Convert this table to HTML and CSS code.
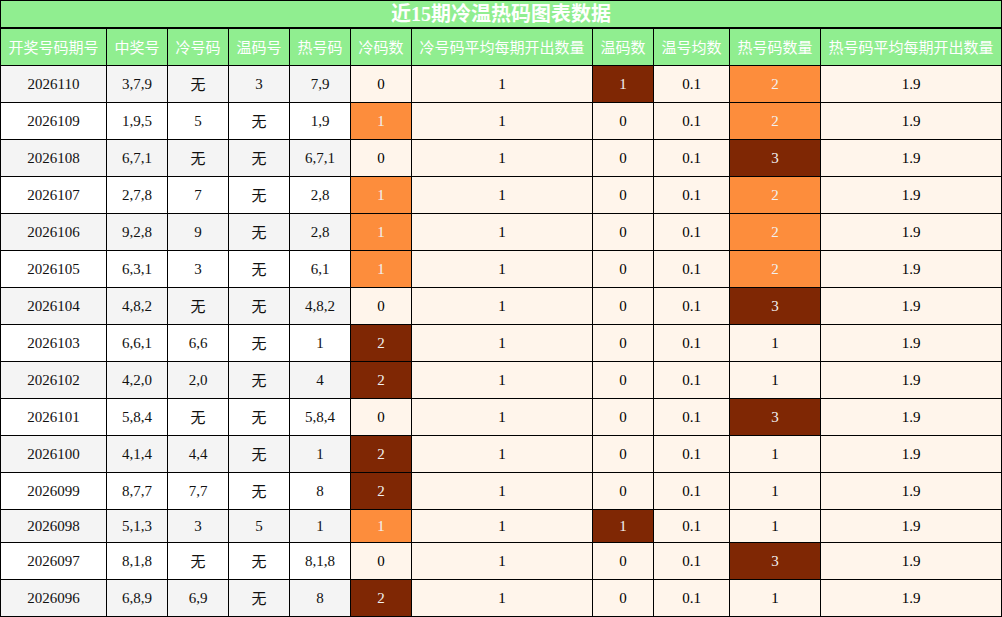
FILE: index.html
```html
<!DOCTYPE html>
<html lang="zh">
<head>
<meta charset="utf-8">
<title>近15期冷温热码图表数据</title>
<link rel="stylesheet" href="styles.css">
</head>
<body>
<div class="title">近15期冷温热码图表数据</div>
<table class="grid">
  <thead>
    <tr>
      <th class="w106">开奖号码期号</th>
      <th class="w61">中奖号</th>
      <th class="w61">冷号码</th>
      <th class="w61">温码号</th>
      <th class="w61">热号码</th>
      <th class="w61">冷码数</th>
      <th class="w181">冷号码平均每期开出数量</th>
      <th class="w61">温码数</th>
      <th class="w76">温号均数</th>
      <th class="w91">热号码数量</th>
      <th class="w181">热号码平均每期开出数量</th>
    </tr>
  </thead>
  <tbody>
    <tr class="odd"><td>2026110</td><td>3,7,9</td><td><span class="none">无</span></td><td>3</td><td>7,9</td><td class="c0">0</td><td class="c0">1</td><td class="c2">1</td><td class="c0">0.1</td><td class="c1">2</td><td class="c0">1.9</td></tr>
    <tr><td>2026109</td><td>1,9,5</td><td>5</td><td><span class="none">无</span></td><td>1,9</td><td class="c1">1</td><td class="c0">1</td><td class="c0">0</td><td class="c0">0.1</td><td class="c1">2</td><td class="c0">1.9</td></tr>
    <tr class="odd"><td>2026108</td><td>6,7,1</td><td><span class="none">无</span></td><td><span class="none">无</span></td><td>6,7,1</td><td class="c0">0</td><td class="c0">1</td><td class="c0">0</td><td class="c0">0.1</td><td class="c2">3</td><td class="c0">1.9</td></tr>
    <tr><td>2026107</td><td>2,7,8</td><td>7</td><td><span class="none">无</span></td><td>2,8</td><td class="c1">1</td><td class="c0">1</td><td class="c0">0</td><td class="c0">0.1</td><td class="c1">2</td><td class="c0">1.9</td></tr>
    <tr class="odd"><td>2026106</td><td>9,2,8</td><td>9</td><td><span class="none">无</span></td><td>2,8</td><td class="c1">1</td><td class="c0">1</td><td class="c0">0</td><td class="c0">0.1</td><td class="c1">2</td><td class="c0">1.9</td></tr>
    <tr><td>2026105</td><td>6,3,1</td><td>3</td><td><span class="none">无</span></td><td>6,1</td><td class="c1">1</td><td class="c0">1</td><td class="c0">0</td><td class="c0">0.1</td><td class="c1">2</td><td class="c0">1.9</td></tr>
    <tr class="odd"><td>2026104</td><td>4,8,2</td><td><span class="none">无</span></td><td><span class="none">无</span></td><td>4,8,2</td><td class="c0">0</td><td class="c0">1</td><td class="c0">0</td><td class="c0">0.1</td><td class="c2">3</td><td class="c0">1.9</td></tr>
    <tr><td>2026103</td><td>6,6,1</td><td>6,6</td><td><span class="none">无</span></td><td>1</td><td class="c2">2</td><td class="c0">1</td><td class="c0">0</td><td class="c0">0.1</td><td class="c0">1</td><td class="c0">1.9</td></tr>
    <tr class="odd"><td>2026102</td><td>4,2,0</td><td>2,0</td><td><span class="none">无</span></td><td>4</td><td class="c2">2</td><td class="c0">1</td><td class="c0">0</td><td class="c0">0.1</td><td class="c0">1</td><td class="c0">1.9</td></tr>
    <tr><td>2026101</td><td>5,8,4</td><td><span class="none">无</span></td><td><span class="none">无</span></td><td>5,8,4</td><td class="c0">0</td><td class="c0">1</td><td class="c0">0</td><td class="c0">0.1</td><td class="c2">3</td><td class="c0">1.9</td></tr>
    <tr class="odd"><td>2026100</td><td>4,1,4</td><td>4,4</td><td><span class="none">无</span></td><td>1</td><td class="c2">2</td><td class="c0">1</td><td class="c0">0</td><td class="c0">0.1</td><td class="c0">1</td><td class="c0">1.9</td></tr>
    <tr><td>2026099</td><td>8,7,7</td><td>7,7</td><td><span class="none">无</span></td><td>8</td><td class="c2">2</td><td class="c0">1</td><td class="c0">0</td><td class="c0">0.1</td><td class="c0">1</td><td class="c0">1.9</td></tr>
    <tr class="odd"><td>2026098</td><td>5,1,3</td><td>3</td><td>5</td><td>1</td><td class="c1">1</td><td class="c0">1</td><td class="c2">1</td><td class="c0">0.1</td><td class="c0">1</td><td class="c0">1.9</td></tr>
    <tr><td>2026097</td><td>8,1,8</td><td><span class="none">无</span></td><td><span class="none">无</span></td><td>8,1,8</td><td class="c0">0</td><td class="c0">1</td><td class="c0">0</td><td class="c0">0.1</td><td class="c2">3</td><td class="c0">1.9</td></tr>
    <tr class="odd"><td>2026096</td><td>6,8,9</td><td>6,9</td><td><span class="none">无</span></td><td>8</td><td class="c2">2</td><td class="c0">1</td><td class="c0">0</td><td class="c0">0.1</td><td class="c0">1</td><td class="c0">1.9</td></tr>
  </tbody>
</table>
</body>
</html>
```
FILE: styles.css
```css
html, body {
  margin: 0;
  padding: 0;
  background: #ffffff;
}

body {
  width: 1002px;
  font-family: "Liberation Serif", "Noto Sans CJK SC", serif;
  color: #111;
}

.title {
  box-sizing: border-box;
  width: 1002px;
  height: 28px;
  border: 1px solid #000;
  background: #90ee90;
  color: #ffffff;
  font-weight: bold;
  font-size: 20px;
  line-height: 26px;
  text-align: center;
}

.grid {
  width: 1002px;
  table-layout: fixed;
  border-collapse: separate;
  border-spacing: 0;
  border-left: 1px solid #000;
  border-top: 1px solid #000;
}

.grid th,
.grid td {
  box-sizing: border-box;
  border-right: 1px solid #000;
  border-bottom: 1px solid #000;
  text-align: center;
  padding: 7px 2px;
  white-space: nowrap;
}

.grid th {
  background: #90ee90;
  color: #ffffff;
  font-family: "Noto Sans CJK SC", sans-serif;
  font-weight: normal;
  font-size: 15px;
  line-height: 22px;
}

.grid td {
  font-size: 15px;
  line-height: 18px;
  background: #ffffff;
}

.grid tr.odd td {
  background: #f4f4f4;
}

.w106 { width: 106px; }
.w61 { width: 61px; }
.w76 { width: 76px; }
.w91 { width: 91px; }
.w181 { width: 181px; }

.none {
  font-family: "Noto Sans CJK SC", sans-serif;
  line-height: 22px;
}

.grid td.c0,
.grid tr.odd td.c0 {
  background: #fff5eb;
  color: #000;
}

.grid td.c1,
.grid tr.odd td.c1 {
  background: #fd8d3c;
  color: #f1f1f1;
}

.grid td.c2,
.grid tr.odd td.c2 {
  background: #7f2704;
  color: #f1f1f1;
}
```
